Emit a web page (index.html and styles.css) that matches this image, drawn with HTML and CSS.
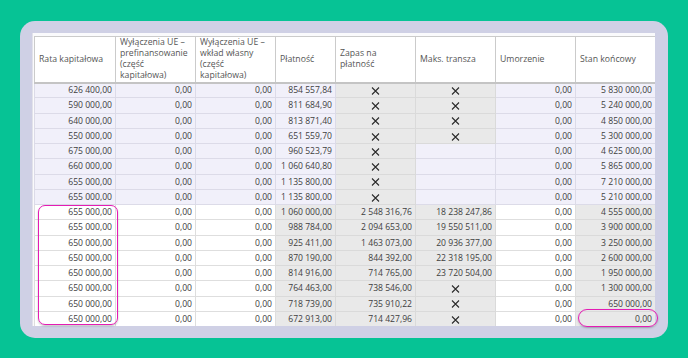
FILE: index.html
```html
<!DOCTYPE html>
<html lang="pl">
<head>
    <meta charset="UTF-8">
    <title>Harmonogram spłat</title>
    <link rel="stylesheet" href="styles.css">
</head>
<body>
    <div class="card">
        <div class="grid-frame">
            <table class="grid">
                <colgroup>
                    <col class="c-wide"><col><col><col class="c-narrow"><col><col><col><col>
                </colgroup>
                <thead>
                    <tr>
                        <th>Rata kapitałowa</th>
                        <th>Wyłączenia UE –<br>prefinansowanie<br>(część<br>kapitałowa)</th>
                        <th>Wyłączenia UE –<br>wkład własny<br>(część<br>kapitałowa)</th>
                        <th>Płatność</th>
                        <th>Zapas na<br>płatność</th>
                        <th>Maks. transza</th>
                        <th>Umorzenie</th>
                        <th>Stan końcowy</th>
                    </tr>
                </thead>
                <tbody id="rows"></tbody>
            </table>
        </div>

        <!-- highlights drawn over the grid -->
        <div class="mark mark-rata"></div>
        <div class="mark mark-stan"></div>
    </div>

    <script>
        // x = crossed cell, '' = empty cell
        const data = [
            ['626 400,00', '0,00', '0,00', '854 557,84', 'x', 'x', '0,00', '5 830 000,00'],
            ['590 000,00', '0,00', '0,00', '811 684,90', 'x', 'x', '0,00', '5 240 000,00'],
            ['640 000,00', '0,00', '0,00', '813 871,40', 'x', 'x', '0,00', '4 850 000,00'],
            ['550 000,00', '0,00', '0,00', '651 559,70', 'x', 'x', '0,00', '5 300 000,00'],
            ['675 000,00', '0,00', '0,00', '960 523,79', 'x', '', '0,00', '4 625 000,00'],
            ['660 000,00', '0,00', '0,00', '1 060 640,80', 'x', '', '0,00', '5 865 000,00'],
            ['655 000,00', '0,00', '0,00', '1 135 800,00', 'x', '', '0,00', '7 210 000,00'],
            ['655 000,00', '0,00', '0,00', '1 135 800,00', 'x', '', '0,00', '5 210 000,00'],
            ['655 000,00', '0,00', '0,00', '1 060 000,00', '2 548 316,76', '18 238 247,86', '0,00', '4 555 000,00'],
            ['655 000,00', '0,00', '0,00', '988 784,00', '2 094 653,00', '19 550 511,00', '0,00', '3 900 000,00'],
            ['650 000,00', '0,00', '0,00', '925 411,00', '1 463 073,00', '20 936 377,00', '0,00', '3 250 000,00'],
            ['650 000,00', '0,00', '0,00', '870 190,00', '844 392,00', '22 318 195,00', '0,00', '2 600 000,00'],
            ['650 000,00', '0,00', '0,00', '814 916,00', '714 765,00', '23 720 504,00', '0,00', '1 950 000,00'],
            ['650 000,00', '0,00', '0,00', '764 463,00', '738 546,00', 'x', '0,00', '1 300 000,00'],
            ['650 000,00', '0,00', '0,00', '718 739,00', '735 910,22', 'x', '0,00', '650 000,00'],
            ['650 000,00', '0,00', '0,00', '672 913,00', '714 427,96', 'x', '0,00', '0,00']
        ];

        const cross = '<svg class="cross" width="9" height="8" viewBox="0 0 9 8"><path d="M1 0.5 L8 7.5 M8 0.5 L1 7.5" stroke="#2b2b2b" stroke-width="1.1" fill="none"/></svg>';
        const tbody = document.getElementById('rows');

        data.forEach((row, i) => {
            const tr = document.createElement('tr');
            // first 8 rows are the past periods (lavender)
            tr.className = i < 8 ? 'past' : 'plan';
            row.forEach((val, c) => {
                const td = document.createElement('td');
                if (val === 'x') {
                    td.className = 'ro mark-x';
                    td.innerHTML = cross;
                } else {
                    td.textContent = val;
                    if (val === '') td.className = 'empty';
                }
                // computed columns are greyed out in the plan rows
                if (i >= 8 && (c === 3 || c === 4 || c === 5 || c === 7)) td.classList.add('ro');
                tr.appendChild(td);
            });
            tbody.appendChild(tr);
        });
    </script>
</body>
</html>
```

FILE: styles.css
```css
* {
    margin: 0;
    padding: 0;
    box-sizing: border-box;
}

body {
    background-color: #06c395;
    font-family: "Open Sans", "Noto Sans", sans-serif;
    color: #404040;
}

.card {
    position: relative;
    margin: 21px 0 0 20px;
    width: 648px;
    height: 317px;
    padding: 12px 13px 12px 12px;
    background-color: #cfd0e5;
    border-radius: 15px;
}

.grid-frame {
    width: 623px;
    height: 293px;
    padding: 3px 0 0 1px;
    background-color: #fafafc;
    border-left: 1px solid #e2e2ea;
    overflow: hidden;
}

.grid {
    width: 621px;
    table-layout: fixed;
    border-collapse: collapse;
    font-size: 8.6px;
}

.grid col {
    width: 80px;
}

.grid col.c-wide {
    width: 81px;
}

.grid col.c-narrow {
    width: 60px;
}

.grid th {
    height: 46px;
    padding: 0 3px 0 4px;
    background-color: #ffffff;
    border: 1px solid #cbcbcb;
    border-bottom: 2px solid #c4c4c4;
    text-align: left;
    vertical-align: middle;
    font-size: 8.7px;
    font-weight: 400;
    line-height: 11px;
    color: #555555;
    white-space: nowrap;
}

.grid td {
    height: 15.25px;
    padding: 0 3px 0 2px;
    text-align: right;
    white-space: nowrap;
    line-height: 12px;
    border: 1px solid #dedede;
}

.past td {
    background-color: #f1f0fa;
    border-color: #dcdbe8;
}

.plan td {
    background-color: #ffffff;
}

.grid td.ro {
    background-color: #e9e9e9;
    border-color: #dadada;
}

.grid td.mark-x {
    text-align: center;
    padding: 0;
}

.cross {
    display: inline-block;
    vertical-align: middle;
}

.mark {
    position: absolute;
    border: 1.6px solid #e41cb4;
    box-shadow: 0 1px 2px rgba(0, 0, 0, 0.25);
}

.mark-rata {
    left: 18px;
    top: 184px;
    width: 80px;
    height: 120px;
    border-radius: 7px;
}

.mark-stan {
    left: 558px;
    top: 288px;
    width: 80px;
    height: 18px;
    border-radius: 9px;
}
```
